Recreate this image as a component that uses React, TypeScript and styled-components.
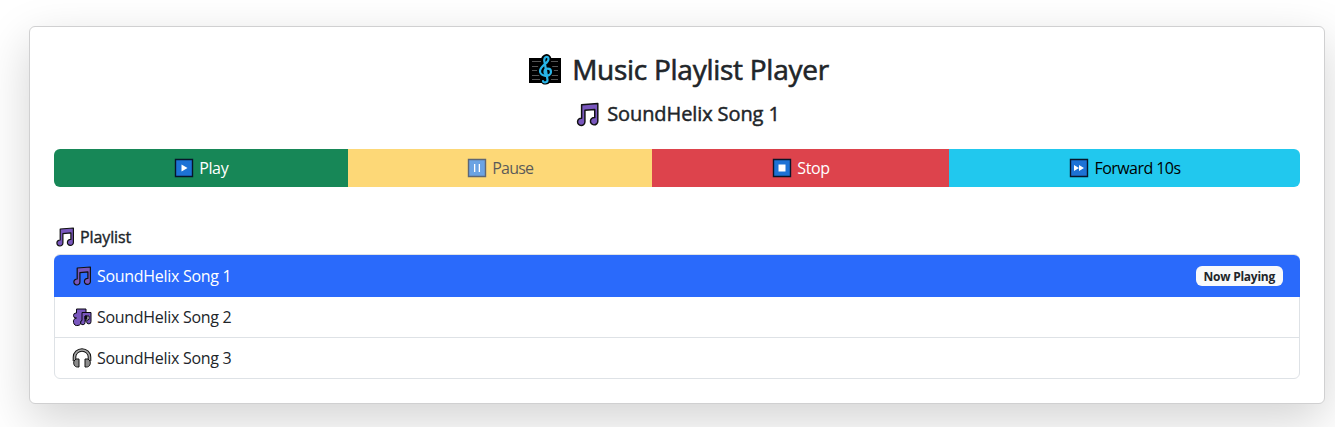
import React from 'react';
import styled, { createGlobalStyle, css } from 'styled-components';

const GlobalStyle = createGlobalStyle`
  * { box-sizing: border-box; }
  body {
    margin: 0;
    height: 427px;
    overflow: hidden;
    background: #fff;
    color: #212529;
    font: 400 16px/24px "Open Sans", "Noto Sans", sans-serif;
  }
  svg { display: block; flex: none; }
`;

const Page = styled.main`
  padding: 26px 10px 0 29px;
`;

const Card = styled.section`
  height: 378px;
  padding: 24px;
  border: 1px solid #d0d0d1;
  border-radius: 6px;
  background: #fff;
  box-shadow: 0 16px 48px rgba(0, 0, 0, 0.175);
`;

const Label = styled.span<{ $spacing?: number }>`
  letter-spacing: ${(p) => p.$spacing ?? -0.35}px;
  white-space: nowrap;
`;

const Title = styled.h1`
  display: flex;
  align-items: center;
  justify-content: center;
  gap: 8px;
  height: 34px;
  margin: 1px 0 16px;
  padding-left: 2px;
  font-size: 28px;
  font-weight: 400;
  -webkit-text-stroke: 0.6px currentColor;
`;

const CurrentSong = styled.h2`
  display: flex;
  align-items: center;
  justify-content: center;
  gap: 6px;
  height: 24px;
  margin: 0 0 23px;
  font-size: 20px;
  font-weight: 400;
  -webkit-text-stroke: 0.45px currentColor;
`;

const Controls = styled.div`
  display: grid;
  grid-template-columns: 293.5px 304.5px 297px 1fr;
  height: 38px;
  border-radius: 6px;
  overflow: hidden;
`;

const variants = {
  success: css`background: #178757; color: #fff;`,
  warning: css`background: #fcc42f; color: #000;`,
  danger: css`background: #dd434c; color: #fff;`,
  info: css`background: #21c8ee; color: #000;`,
};

const ControlButton = styled.button<{ $variant: keyof typeof variants }>`
  display: flex;
  align-items: center;
  justify-content: center;
  gap: 4px;
  padding: 0;
  border: 0;
  font: inherit;
  ${(p) => variants[p.$variant]}

  &:disabled { opacity: 0.65; }
`;

const PlaylistHeading = styled.h3`
  display: flex;
  align-items: center;
  gap: 4px;
  height: 20px;
  margin: 40px 0 7px;
  font-size: 16px;
  font-weight: 400;
  -webkit-text-stroke: 0.4px currentColor;
`;

const List = styled.ul`
  list-style: none;
  margin: 0;
  padding: 0;
  border: 1px solid #dee2e6;
  border-radius: 6px;
`;

const Item = styled.li<{ $active?: boolean }>`
  display: flex;
  align-items: center;
  gap: 4px;
  height: 41px;
  padding: 0 16px;

  &:last-child { height: 40px; }
  &:not(:last-child) { border-bottom: 1px solid #dee2e6; }

  ${(p) => p.$active && css`
    height: 42px;
    margin: 0 -1px;
    padding: 0 17px;
    border-radius: 6px 6px 0 0;
    background: #2a6afb;
    color: #fff;
    && { border-bottom: 0; }
  `}
`;

const Badge = styled.span`
  margin-left: auto;
  height: 20px;
  padding: 0 8px;
  border-radius: 6px;
  background: #f8f9fa;
  color: #212529;
  font-size: 12px;
  line-height: 21px;
  font-weight: 700;
`;

function ClefIcon() {
  return (
    <svg width="37" height="34" viewBox="0 0 37 34" fill="none">
      <path d="M2 6h32v25H2z" fill="#000" />
      <path d="M5 9.500h26M5 14.500h26M5 18.500h26M5 23.500h26M5 27.500h26" stroke="#555" />
      <path d="M18 12.500l-.6-4c0-3 3-4 3.600-1.500 .5 4-7 6-7.500 11-.2 6 9.500 6.500 10 1 0-4-5.500-4-5.500 0M18.500 12l2 15c0 2.500-4 2.500-4 1" stroke="#000" strokeWidth="7" strokeLinecap="round" strokeLinejoin="round" />
      <path d="M18 12.500l-.8-4c0-4 4-5 4.300-1.500 .3 4-8 6.500-8.500 12-.2 6 11 6.500 11 1 0-4.500-6.500-4.500-6.500 0 0 1 1 2 2 2M18 12l2.500 16c0 3-4.500 3-4.500 1" stroke="#28b5e8" strokeWidth="2.200" strokeLinecap="round" strokeLinejoin="round" />
    </svg>
  );
}

function NoteIcon({ size = 22 }: { size?: number }) {
  return (
    <svg width={size} height={size} viewBox="0 0 22 22" fill="#7957bd" stroke="#111" strokeWidth="1.200" strokeLinejoin="round">
      <path d="M6.200 3l13.200-1v14.500a3 3 0 1 1-2.500-3V6.900l-8 .7v9.400a3 3 0 1 1-2.700-3z" />
    </svg>
  );
}

function NotesIcon() {
  return (
    <svg width="22" height="22" viewBox="0 0 22 22" fill="#7957bd" stroke="#0b0812" strokeLinejoin="round">
      <path d="M5.500 3h9.500v12H10a3.800 3.800 0 1 1-4.500-3H5a2.500 2.500 0 0 1 0-5h.5z" />
      <path d="M11 6.500h9v9a2.200 2.200 0 1 1-2-2V10h-4v6.500a2.200 2.200 0 1 1-3-2z" />
      <path d="M14 10h2v3h-2z" fill="#0b0812" />
    </svg>
  );
}

function HeadphonesIcon() {
  return (
    <svg width="22" height="22" viewBox="0 0 22 22" fill="none">
      <path d="M3.500 14V10a7.500 7 0 0 1 15 0V14" stroke="#111" strokeWidth="3.600" />
      <path d="M3.500 14V10a7.500 7 0 0 1 15 0V14" stroke="#a8a8a8" strokeWidth="1.600" />
      <path d="M5 12h3v8H6.500c-3 0-4.500-3-3.500-6zM17 12h-3v8h1.500c3 0 4.500-3 3.500-6z" fill="#8c8c8c" stroke="#111" />
    </svg>
  );
}

const glyphs = {
  play: 'M8.500 7.500l6 3.500-6 3.500z',
  pause: 'M8 7h1.300v8H8zM12.700 7H14v8h-1.300z',
  stop: 'M7.500 7.500h7v7h-7z',
  forward: 'M6 8l5 3-5 3zM11 8l5 3-5 3z',
};

function MediaIcon({ name }: { name: keyof typeof glyphs }) {
  return (
    <svg width="22" height="22" viewBox="0 0 22 22">
      <path d="M2.500 2.500h17v17h-17z" fill="#1d72d5" stroke="#07152b" strokeWidth="1.400" />
      <path d={glyphs[name]} fill="#fff" />
    </svg>
  );
}

export default function App() {
  return (
    <>
      <GlobalStyle />
      <Page>
        <Card>
          <Title><ClefIcon /><Label $spacing={-0.27}>Music Playlist Player</Label></Title>
          <CurrentSong><NoteIcon size={27} /><Label $spacing={-0.1}>SoundHelix Song 1</Label></CurrentSong>
          <Controls>
            <ControlButton $variant="success"><MediaIcon name="play" /><Label>Play</Label></ControlButton>
            <ControlButton $variant="warning" disabled><MediaIcon name="pause" /><Label $spacing={-0.75}>Pause</Label></ControlButton>
            <ControlButton $variant="danger"><MediaIcon name="stop" /><Label>Stop</Label></ControlButton>
            <ControlButton $variant="info"><MediaIcon name="forward" /><Label $spacing={-0.55}>Forward 10s</Label></ControlButton>
          </Controls>
          <PlaylistHeading><NoteIcon /><Label $spacing={-0.1}>Playlist</Label></PlaylistHeading>
          <List>
            <Item $active><NoteIcon /><Label $spacing={-0.3}>SoundHelix Song 1</Label><Badge><Label $spacing={-0.25}>Now Playing</Label></Badge></Item>
            <Item><NotesIcon /><Label $spacing={-0.3}>SoundHelix Song 2</Label></Item>
            <Item><HeadphonesIcon /><Label $spacing={-0.3}>SoundHelix Song 3</Label></Item>
          </List>
        </Card>
      </Page>
    </>
  );
}
